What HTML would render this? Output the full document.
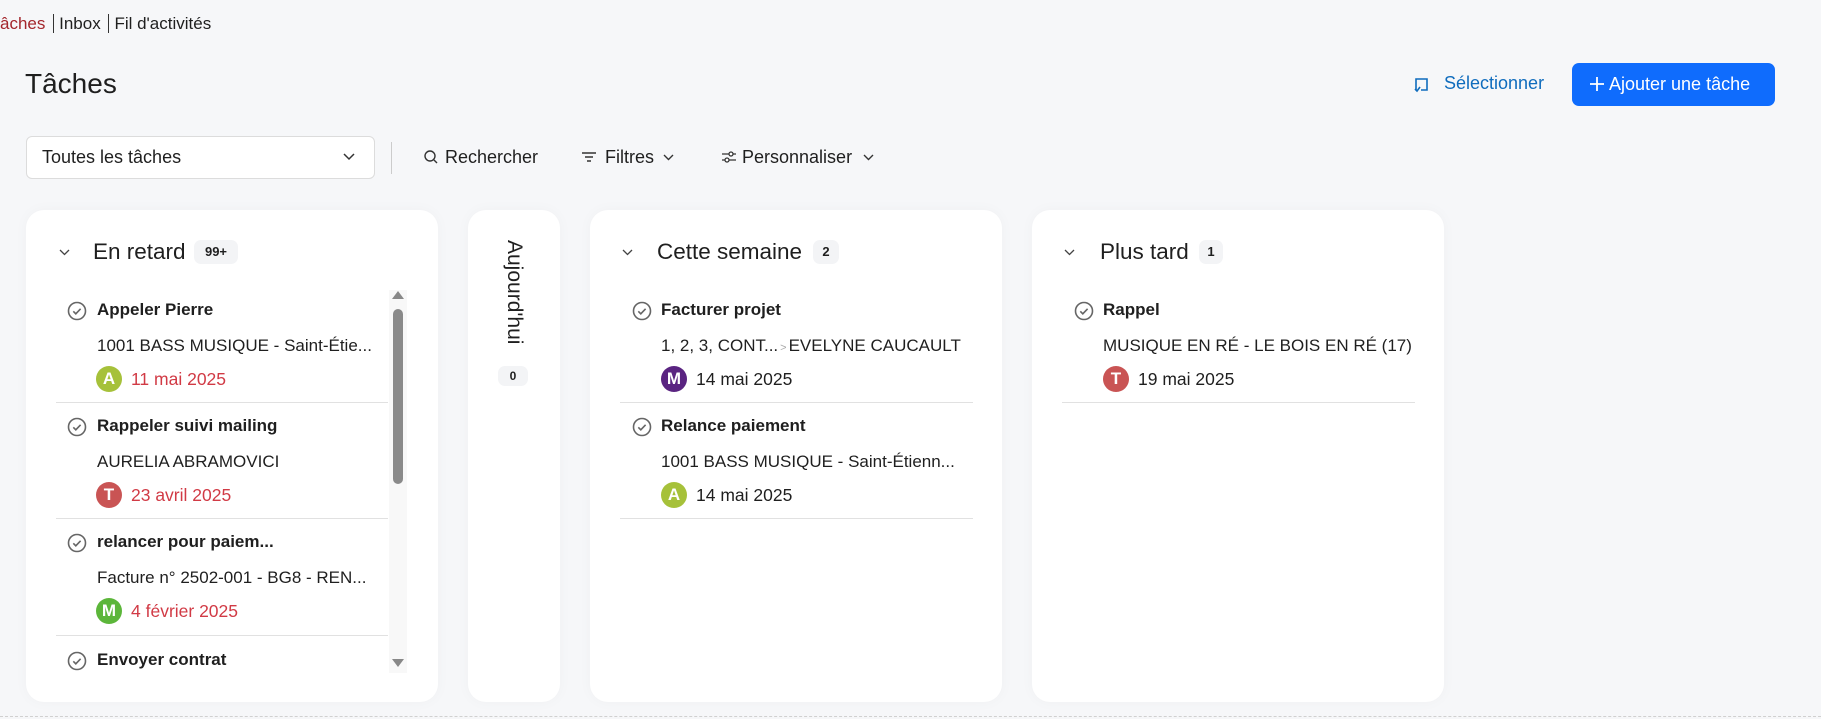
<!DOCTYPE html>
<html><head><meta charset="utf-8"><style>
*{box-sizing:border-box;margin:0;padding:0}
body{width:1821px;height:719px;background:#f6f7f9;font-family:"Liberation Sans",sans-serif;color:#1f1f1f;position:relative;overflow:hidden}
.a{position:absolute;white-space:nowrap}
.col{position:absolute;top:210px;height:492px;background:#fff;border-radius:18px;box-shadow:0 0 14px rgba(0,0,0,0.03)}
.hd{font-size:22.5px;top:239px}
.badge{position:absolute;height:24px;border-radius:7px;background:#f3f4f6;font-size:13px;font-weight:bold;text-align:center;line-height:24px}
.t{font-size:17px;font-weight:bold}
.s{font-size:17px}
.d{font-size:17.5px}
.red{color:#d13a45}
.av{position:absolute;width:26px;height:26px;border-radius:50%;color:#fff;font-weight:bold;font-size:17px;text-align:center;line-height:26px}
.sep{position:absolute;height:1px;background:#e1e1e1}
.bc{border-left:1.5px solid #333;padding-left:5px;margin-left:3px}
</style></head><body>
<div class="a" style="left:0;top:14px;font-size:17px"><span style="color:#a4262c">âches</span> <span class="bc">Inbox</span> <span class="bc">Fil d'activités</span></div>
<div class="a" style="left:25px;top:68px;font-size:28px">Tâches</div>
<svg class="a" style="left:1412px;top:76px" width="18" height="18" viewBox="0 0 18 18" fill="none" stroke="#0f6cbd" stroke-width="1.6"><path d="M4 14V3h11v11H9"/><path d="M3 13l2 2 3-4"/></svg>
<div class="a" style="left:1444px;top:73px;font-size:18px;color:#0f6cbd">Sélectionner</div>
<div class="a" style="left:1572px;top:63px;width:203px;height:43px;background:#0f6cfd;border-radius:7px;color:#fff;font-size:18px;line-height:43px;padding-left:17px"><svg width="16" height="16" viewBox="0 0 16 16" style="vertical-align:-2px;margin-right:4px" stroke="#fff" stroke-width="1.8"><path d="M8 1v14M1 8h14"/></svg>Ajouter une tâche</div>
<div class="a" style="left:26px;top:136px;width:349px;height:43px;background:#fff;border:1px solid #dcdcdc;border-radius:6px;font-size:18px;line-height:41px;padding-left:15px">Toutes les tâches</div>
<svg class="a" style="left:342px;top:150px" width="14" height="14" viewBox="0 0 14 14" fill="none" stroke="#333" stroke-width="1.5"><path d="M2 4l5 5 5-5"/></svg>
<div class="a" style="left:391px;top:142px;width:1px;height:32px;background:#ccc"></div>
<svg class="a" style="left:423px;top:149px" width="16" height="16" viewBox="0 0 16 16" fill="none" stroke="#333" stroke-width="1.4"><circle cx="7" cy="7" r="5"/><path d="M11 11l3 3"/></svg>
<div class="a" style="left:445px;top:147px;font-size:18px">Rechercher</div>
<svg class="a" style="left:581px;top:150px" width="16" height="14" viewBox="0 0 16 14" stroke="#333" stroke-width="1.4"><path d="M1 3h14M4 7h8M6 11h4"/></svg>
<div class="a" style="left:605px;top:147px;font-size:18px">Filtres</div>
<svg class="a" style="left:662px;top:152px" width="13" height="10" viewBox="0 0 13 10" fill="none" stroke="#333" stroke-width="1.4"><path d="M2 3l4.5 4.5L11 3"/></svg>
<svg class="a" style="left:721px;top:149px" width="16" height="16" viewBox="0 0 16 16" fill="none" stroke="#333" stroke-width="1.3"><path d="M1 5h14M1 11h14"/><circle cx="10" cy="5" r="2" fill="#fff"/><circle cx="6" cy="11" r="2" fill="#fff"/></svg>
<div class="a" style="left:742px;top:147px;font-size:18px">Personnaliser</div>
<svg class="a" style="left:862px;top:152px" width="13" height="10" viewBox="0 0 13 10" fill="none" stroke="#333" stroke-width="1.4"><path d="M2 3l4.5 4.5L11 3"/></svg>

<div class="col" style="left:26px;width:412px"></div>
<div class="col" style="left:468px;width:92px"></div>
<div class="col" style="left:590px;width:412px"></div>
<div class="col" style="left:1032px;width:412px"></div>
<div class="a" style="left:0;top:716px;width:1821px;border-top:1px dashed #d0d0d0"></div>

<svg class="a" style="left:58px;top:247px" width="13" height="10" viewBox="0 0 13 10" fill="none" stroke="#444" stroke-width="1.3"><path d="M2 3l4.5 4.5L11 3"/></svg>
<div class="a hd" style="left:93px">En retard</div>
<div class="badge" style="left:194px;top:240px;width:44px">99+</div>
<svg class="a" style="left:621px;top:247px" width="13" height="10" viewBox="0 0 13 10" fill="none" stroke="#444" stroke-width="1.3"><path d="M2 3l4.5 4.5L11 3"/></svg>
<div class="a hd" style="left:657px">Cette semaine</div>
<div class="badge" style="left:813px;top:240px;width:26px">2</div>
<svg class="a" style="left:1063px;top:247px" width="13" height="10" viewBox="0 0 13 10" fill="none" stroke="#444" stroke-width="1.3"><path d="M2 3l4.5 4.5L11 3"/></svg>
<div class="a hd" style="left:1100px">Plus tard</div>
<div class="badge" style="left:1199px;top:240px;width:24px">1</div>
<div class="a" style="left:502px;top:240px;font-size:21px;transform-origin:0 0;transform:translate(24px,0) rotate(90deg)">Aujourd'hui</div>
<div class="badge" style="left:498px;top:366px;width:30px;height:20px;line-height:20px;font-size:12px">0</div>

<svg width="0" height="0" style="position:absolute"><defs><g id="ck"><circle cx="10" cy="10" r="8.5" fill="none" stroke="#666" stroke-width="1.6"/><path d="M6.3 10.3l2.5 2.5 4.8-5" fill="none" stroke="#666" stroke-width="1.6"/></g></defs></svg>

<div class="a" style="left:56px;top:290px;width:340px;height:383px;overflow:hidden">
 <div style="position:relative">
  <svg class="a" style="left:11px;top:11px" width="20" height="20"><use href="#ck"/></svg>
  <div class="a t" style="left:41px;top:10px">Appeler Pierre</div>
  <div class="a s" style="left:41px;top:46px">1001 BASS MUSIQUE - Saint-Étie...</div>
  <div class="av" style="left:40px;top:76px;background:#a6c13a">A</div>
  <div class="a d red" style="left:75px;top:79px">11 mai 2025</div>
  <div class="sep" style="left:0;top:112px;width:332px"></div>
  <svg class="a" style="left:11px;top:127px" width="20" height="20"><use href="#ck"/></svg>
  <div class="a t" style="left:41px;top:126px">Rappeler suivi mailing</div>
  <div class="a s" style="left:41px;top:162px">AURELIA ABRAMOVICI</div>
  <div class="av" style="left:40px;top:192px;background:#c95454">T</div>
  <div class="a d red" style="left:75px;top:195px">23 avril 2025</div>
  <div class="sep" style="left:0;top:228px;width:332px"></div>
  <svg class="a" style="left:11px;top:243px" width="20" height="20"><use href="#ck"/></svg>
  <div class="a t" style="left:41px;top:242px">relancer pour paiem...</div>
  <div class="a s" style="left:41px;top:278px">Facture n° 2502-001 - BG8 - REN...</div>
  <div class="av" style="left:40px;top:308px;background:#5cb63a">M</div>
  <div class="a d red" style="left:75px;top:311px">4 février 2025</div>
  <div class="sep" style="left:0;top:345px;width:332px"></div>
  <svg class="a" style="left:11px;top:361px" width="20" height="20"><use href="#ck"/></svg>
  <div class="a t" style="left:41px;top:360px">Envoyer contrat</div>
 </div>
</div>
<div class="a" style="left:389px;top:290px;width:18px;height:383px;background:#f8f8f8"></div>
<div class="a" style="left:392px;top:291px;width:0;height:0;border-left:6px solid transparent;border-right:6px solid transparent;border-bottom:8px solid #888"></div>
<div class="a" style="left:393px;top:309px;width:10px;height:175px;background:#8a8a8a;border-radius:5px"></div>
<div class="a" style="left:392px;top:659px;width:0;height:0;border-left:6px solid transparent;border-right:6px solid transparent;border-top:8px solid #888"></div>

<svg class="a" style="left:632px;top:301px" width="20" height="20"><use href="#ck"/></svg>
<div class="a t" style="left:661px;top:300px">Facturer projet</div>
<div class="a s" style="left:661px;top:336px">1, 2, 3, CONT...<span style="font-size:11px;color:#aaa;margin:0 2px">&gt;</span>EVELYNE CAUCAULT</div>
<div class="av" style="left:661px;top:366px;background:#5a2481">M</div>
<div class="a d" style="left:696px;top:369px">14 mai 2025</div>
<div class="sep" style="left:620px;top:402px;width:353px"></div>
<svg class="a" style="left:632px;top:417px" width="20" height="20"><use href="#ck"/></svg>
<div class="a t" style="left:661px;top:416px">Relance paiement</div>
<div class="a s" style="left:661px;top:452px">1001 BASS MUSIQUE - Saint-Étienn...</div>
<div class="av" style="left:661px;top:482px;background:#a6c13a">A</div>
<div class="a d" style="left:696px;top:485px">14 mai 2025</div>
<div class="sep" style="left:620px;top:518px;width:353px"></div>

<svg class="a" style="left:1074px;top:301px" width="20" height="20"><use href="#ck"/></svg>
<div class="a t" style="left:1103px;top:300px">Rappel</div>
<div class="a s" style="left:1103px;top:336px">MUSIQUE EN RÉ - LE BOIS EN RÉ (17)</div>
<div class="av" style="left:1103px;top:366px;background:#c95454">T</div>
<div class="a d" style="left:1138px;top:369px">19 mai 2025</div>
<div class="sep" style="left:1062px;top:402px;width:353px"></div>
</body></html>
